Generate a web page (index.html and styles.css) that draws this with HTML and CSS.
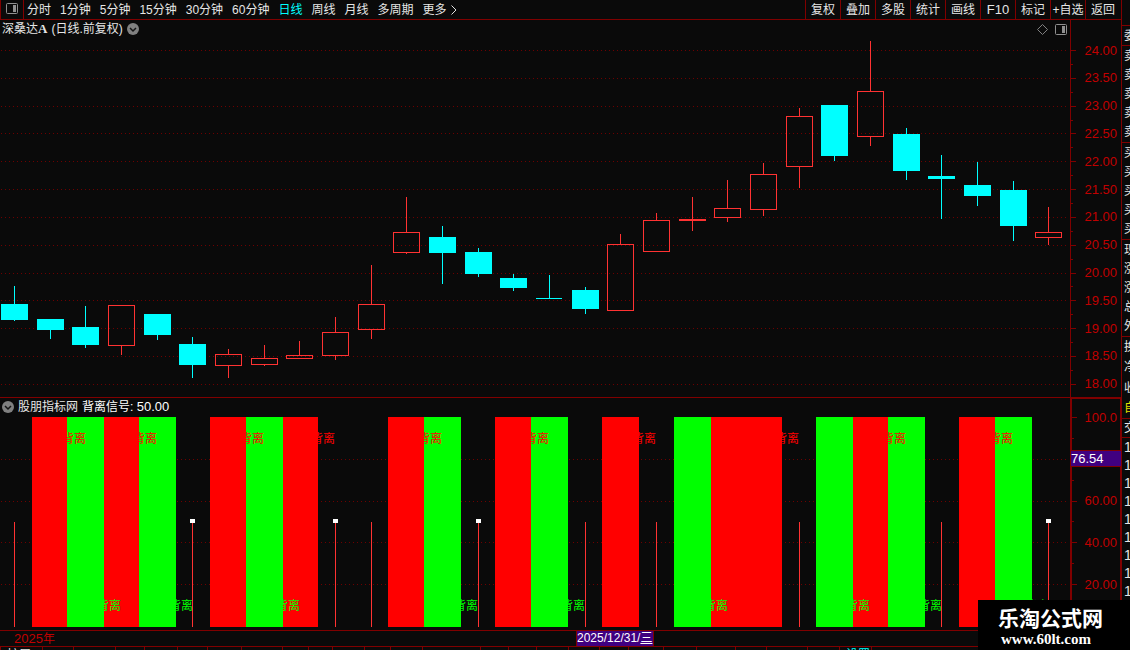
FILE: index.html
```html
<!DOCTYPE html>
<html lang="zh-CN">
<head>
<meta charset="utf-8">
<title>深桑达A 日线</title>
<link rel="stylesheet" href="styles.css">
</head>
<body>
<div class="app">
  <main class="main">
    <header class="toolbar">
      <button class="panel-toggle" aria-label="侧栏">
        <svg width="12" height="11" viewBox="0 0 12 11"><rect x=".5" y=".5" width="11" height="10" rx="1" fill="none" stroke="#909090"/><rect x="7" y="2" width="3" height="7" fill="#909090"/></svg>
      </button>
      <nav class="periods">
        <button>分时</button><button>1分钟</button><button>5分钟</button><button>15分钟</button><button>30分钟</button><button>60分钟</button><button class="active">日线</button><button>周线</button><button>月线</button><button>多周期</button><button class="more">更多<svg width="6" height="10" viewBox="0 0 6 10"><path d="M.5 .5L5 5L.5 9.5" fill="none" stroke="#e0e0e0"/></svg></button>
      </nav>
      <div class="tools">
        <button>复权</button><button>叠加</button><button>多股</button><button>统计</button><button>画线</button><button class="num">F10</button><button>标记</button><button>+自选</button><button>返回</button>
      </div>
    </header>

    <section class="panel price">
      <div class="plot">
        <svg class="chart" viewBox="0 20 1070 377" preserveAspectRatio="xMinYMin meet">
          <path class="grid" d="M1 50.5H1068M1 78.5H1068M1 106.5H1068M1 133.5H1068M1 161.5H1068M1 189.5H1068M1 217.5H1068M1 245.5H1068M1 273.5H1068M1 300.5H1068M1 328.5H1068M1 356.5H1068M1 384.5H1068"/>
          <path class="wick-down" d="M14.5 286V321M50.5 319V339M85.5 306V348M157.5 314V340M192.5 337V378M442.5 226V284M478.5 248V277M513.5 274V291M549.5 275V298M585.5 287V314M834.5 105V161M906.5 128V180M941.5 155V219M977.5 162V206M1013.5 181V241"/>
          <g class="down">
            <rect x="1" y="304" width="27" height="16"/><rect x="37" y="319" width="27" height="11"/><rect x="72" y="327" width="27" height="18"/><rect x="144" y="314" width="27" height="21"/><rect x="179" y="344" width="27" height="21"/>
            <rect x="429" y="237" width="27" height="16"/><rect x="465" y="252" width="27" height="22"/><rect x="500" y="278" width="27" height="10"/><rect x="536" y="298" width="26" height="1"/><rect x="572" y="290" width="27" height="19"/>
            <rect x="821" y="105" width="27" height="51"/><rect x="893" y="134" width="27" height="37"/><rect x="928" y="176" width="27" height="3"/><rect x="964" y="185" width="27" height="11"/><rect x="1000" y="190" width="27" height="36"/>
          </g>
          <path class="wick-up" d="M121.5 346V355M228.5 349V354M228.5 366V378M264.5 345V358M264.5 365V366M299.5 341V355M335.5 317V332M335.5 356V360M371.5 265V304M371.5 330V339M406.5 197V232M406.5 253V254M620.5 234V244M656.5 213V220M692.5 197V231M727.5 180V208M727.5 218V222M763.5 163V174M763.5 210V216M799.5 108V116M799.5 167V188M870.5 41V91M870.5 137V146M1048.5 207V232M1048.5 238V245"/>
          <g class="up">
            <rect x="108.500" y="305.500" width="26" height="40"/><rect x="215.500" y="354.500" width="26" height="11"/><rect x="251.500" y="358.500" width="26" height="6"/><rect x="286.500" y="355.500" width="26" height="3"/><rect x="322.500" y="332.500" width="26" height="23"/><rect x="358.500" y="304.500" width="26" height="25"/><rect x="393.500" y="232.500" width="26" height="20"/>
            <rect x="607.500" y="244.500" width="26" height="66"/><rect x="643.500" y="220.500" width="26" height="31"/><rect x="679.500" y="219.500" width="26" height="1"/><rect x="714.500" y="208.500" width="26" height="9"/><rect x="750.500" y="174.500" width="26" height="35"/><rect x="786.500" y="116.500" width="26" height="50"/><rect x="857.500" y="91.500" width="26" height="45"/><rect x="1035.500" y="232.500" width="26" height="5"/>
          </g>
        </svg>
        <div class="caption">
          <span class="name">深桑达<b>A</b></span>
          <span>(日线.前复权)</span>
          <button class="round" aria-label="展开"><svg width="12" height="12" viewBox="0 0 12 12"><circle cx="6" cy="6" r="6" fill="#808080"/><path d="M3 5L6 8L9 5" fill="none" stroke="#141414" stroke-width="1.500"/></svg></button>
          <span class="corner">
            <svg width="11" height="11" viewBox="0 0 11 11"><path d="M5.500 .5L10.500 5.500L5.500 10.500L.5 5.500Z" fill="none" stroke="#808080"/></svg>
            <svg width="12" height="11" viewBox="0 0 12 11"><rect x=".5" y=".5" width="11" height="10" rx="1" fill="none" stroke="#909090"/><rect x="7" y="2" width="3" height="7" fill="#909090"/></svg>
          </span>
        </div>
      </div>
      <ul class="axis">
        <li>24.00</li><li class="minor"></li><li>23.50</li><li class="minor"></li><li>23.00</li><li class="minor"></li><li>22.50</li><li class="minor"></li><li>22.00</li><li class="minor"></li><li>21.50</li><li class="minor"></li><li>21.00</li><li class="minor"></li><li>20.50</li><li class="minor"></li><li>20.00</li><li class="minor"></li><li>19.50</li><li class="minor"></li><li>19.00</li><li class="minor"></li><li>18.50</li><li class="minor"></li><li>18.00</li>
      </ul>
    </section>

    <section class="panel signal">
      <div class="plot">
        <svg class="chart" viewBox="0 398 1070 232" preserveAspectRatio="xMinYMin meet">
          <path class="grid" d="M1 459.500H1068M1 501.500H1068M1 542.500H1068M1 584.500H1068"/>
          <path class="bar-red" d="M32 417h35v210h-35zM104 417h35v210h-35zM210 417h36v210h-36zM283 417h35v210h-35zM388 417h36v210h-36zM495 417h36v210h-36zM602 417h37v210h-37zM711 417h71v210h-71zM853 417h35v210h-35zM959 417h36v210h-36z"/>
          <path class="bar-green" d="M67 417h37v210h-37zM139 417h37v210h-37zM246 417h37v210h-37zM424 417h37v210h-37zM531 417h37v210h-37zM674 417h37v210h-37zM816 417h37v210h-37zM888 417h37v210h-37zM995 417h37v210h-37z"/>
          <g class="tag-red">
            <text x="62" y="443">背离</text><text x="133" y="443">背离</text><text x="240" y="443">背离</text><text x="311" y="443">背离</text><text x="418" y="443">背离</text><text x="525" y="443">背离</text><text x="632" y="443">背离</text><text x="775" y="443">背离</text><text x="882" y="443">背离</text><text x="989" y="443">背离</text>
          </g>
          <g class="tag-green">
            <text x="97" y="610">背离</text><text x="169" y="610">背离</text><text x="276" y="610">背离</text><text x="454" y="610">背离</text><text x="561" y="610">背离</text><text x="704" y="610">背离</text><text x="846" y="610">背离</text><text x="918" y="610">背离</text><text x="1025" y="610">背离</text>
          </g>
          <path class="wick-up" d="M14.500 522V627M192.500 522V627M335.500 522V627M371.500 522V627M478.500 522V627M585.500 522V627M656.500 522V627M799.500 522V627M941.500 522V627M1048.500 522V627"/>
          <path class="mark" d="M190 519h5v4h-5zM333 519h5v4h-5zM476 519h5v4h-5zM1046 519h5v4h-5z"/>
        </svg>
        <div class="caption">
          <button class="round" aria-label="展开"><svg width="12" height="12" viewBox="0 0 12 12"><circle cx="6" cy="6" r="6" fill="#808080"/><path d="M3 5L6 8L9 5" fill="none" stroke="#141414" stroke-width="1.500"/></svg></button>
          <span>股朋指标网</span>
          <span class="value">背离信号: <span class="num">50.00</span></span>
        </div>
      </div>
      <ul class="axis">
        <li>100.0</li><li class="minor"></li><li></li><li class="minor"></li><li>60.00</li><li class="minor"></li><li>40.00</li><li class="minor"></li><li>20.00</li>
      </ul>
      <output class="cursor-value">76.54</output>
    </section>

    <div class="timeline">
      <span class="year"><span class="num">2025</span>年</span>
      <time class="cursor-date" datetime="2025-12-31">2025/12/31/<u>三</u></time>
    </div>

    <nav class="tabs">
      <a href="#" style="width:42px">扩展</a><a href="#" style="width:31px"></a><a href="#" style="width:42px"></a><a href="#" style="width:29px"></a><a href="#" style="width:33px"></a><a href="#" style="width:30px"></a><a href="#" style="width:34px"></a><a href="#" style="width:41px"></a><a href="#" style="width:26px"></a><a href="#" style="width:24px"></a><a href="#" style="width:32px"></a><a href="#" style="width:26px"></a><a href="#" style="width:32px"></a><a href="#" style="width:58px"></a><a href="#" style="width:28px"></a><a href="#" style="width:28px"></a><a href="#" style="width:32px"></a><a href="#" style="width:31px"></a><a href="#" style="width:29px"></a><a href="#" style="width:35px"></a><a href="#" style="width:33px"></a><a href="#" style="width:39px"></a><a href="#" style="width:31px"></a><a href="#" style="width:41px"></a><a href="#" style="width:32px"></a><a href="#" class="on" style="width:32px">设置</a><a href="#"></a>
    </nav>
  </main>

  <aside class="quotes">
    <div class="group first"><span>委</span></div>
    <div class="group"><span>卖</span><span>卖</span><span>卖</span><span>卖</span><span>卖</span></div>
    <div class="group"><span>买</span><span>买</span><span>买</span><span>买</span><span>买</span></div>
    <div class="group"><span>现</span><span>涨</span><span>涨</span><span>总</span><span>外</span></div>
    <div class="group short"><span>换</span><span>净</span><span>收</span><span class="self">自</span></div>
    <div class="group one"><span>交</span></div>
    <div class="group ticks"><span>1</span><span>1</span><span>1</span><span>1</span><span>1</span><span>1</span><span>1</span><span>1</span><span>1</span></div>
  </aside>

  <div class="brand">
    <strong>乐淘公式网</strong>
    <span>www.60lt.com</span>
  </div>
</div>
</body>
</html>
```
FILE: styles.css
```css
* { box-sizing: border-box; }

body {
  margin: 0;
  background: #0a0a0a;
  color: #e6e6e6;
  font: 12px/14px "Liberation Sans", "Noto Sans CJK SC", sans-serif;
  overflow: hidden;
}

button {
  margin: 0;
  padding: 0;
  border: 0;
  background: none;
  color: inherit;
  font: inherit;
  white-space: nowrap;
}

svg { display: block; }
ul { margin: 0; padding: 0; list-style: none; }
a { color: inherit; text-decoration: none; }
.num { font-size: 13px; }

.app {
  position: relative;
  display: grid;
  grid-template-columns: minmax(0, 1fr) 9px;
  height: 100vh;
}

.main {
  display: flex;
  flex-direction: column;
  min-height: 0;
  overflow: hidden;
}

/* toolbar */
.toolbar {
  flex: none;
  display: flex;
  height: 20px;
  border-bottom: 1px solid #800000;
}
.panel-toggle {
  display: flex;
  justify-content: center;
  width: 24px;
  padding-top: 3px;
  border: solid #800000;
  border-width: 0 1px;
}
.periods {
  display: flex;
  gap: 9px;
  margin-right: auto;
  padding-left: 3px;
}
.active { color: #00ffff; }
.more { display: flex; align-items: center; gap: 4px; }
.tools { display: flex; padding-right: 1px; }
.tools button {
  width: 35px;
  border-left: 1px solid #800000;
}

/* chart panels */
.panel {
  position: relative;
  display: grid;
  grid-template-columns: minmax(0, 1fr) 51px;
  min-height: 0;
}
.price { flex: 377 1 0; border-bottom: 1px solid #800000; }
.signal { flex: 232 1 0; border-bottom: 1px solid #800000; }
.plot { position: relative; min-height: 0; overflow: hidden; }
.chart { width: 100%; height: 100%; shape-rendering: crispEdges; }

.grid { stroke: #6e0000; stroke-dasharray: 1 3; fill: none; }
.wick-down { stroke: #00ffff; }
.down { fill: #00ffff; }
.wick-up { stroke: #ff3232; }
.up { fill: none; stroke: #ff3232; }
.bar-red, .tag-red { fill: #ff0000; }
.bar-green, .tag-green { fill: #00ff00; }
.mark { fill: #ffffff; }

.caption {
  position: absolute;
  top: 0;
  left: 0;
  right: 0;
  display: flex;
  align-items: center;
  height: 18px;
  padding: 0 3px 0 2px;
  gap: 4px;
}
.name b { font: bold 13px/14px "Liberation Serif", serif; }
.corner { display: flex; gap: 7px; margin-left: auto; }
.value { color: #ffffff; }

.axis {
  display: flex;
  flex-direction: column;
  justify-content: space-between;
  border-left: 1px solid #800000;
  padding: 30px 4px 12px 0;
  color: #c00000;
  font-size: 13px;
}
.axis li {
  display: flex;
  align-items: center;
  justify-content: space-between;
  height: 1px;
}
.axis li::before {
  content: "";
  width: 5px;
  height: 1px;
  background: #800000;
}
.axis .minor::before { width: 2px; }
.signal .axis {
  border: solid #800000;
  border-width: 1px 1px 0 2px;
  padding: 18px 3px 45px 0;
}

.cursor-value {
  position: absolute;
  top: 52px;
  right: 0;
  width: 50px;
  height: 17px;
  border: solid #800000;
  border-width: 1px 0;
  background: #400080;
  color: #ffffff;
  font-size: 13px;
  line-height: 15px;
}

/* time axis */
.timeline {
  position: relative;
  flex: none;
  height: 16px;
  padding-left: 14px;
  border-bottom: 1px solid #800000;
  line-height: 15px;
}
.year { color: #c00000; }
.cursor-date {
  position: absolute;
  top: -1px;
  left: 576px;
  height: 17px;
  padding-right: 1px;
  border: 1px solid #800000;
  background: #400080;
  color: #ffffff;
  line-height: 15px;
}

.tabs { flex: none; display: flex; height: 3px; overflow: hidden; }
.tabs a {
  flex: none;
  padding-left: 6px;
  border-left: 1px solid #800000;
  line-height: 16px;
}
.tabs .on { color: #00ffff; }

/* quote list */
.quotes {
  border-left: 1px solid #800000;
  padding-top: 25px;
  overflow: hidden;
}
.group {
  display: flex;
  flex-direction: column;
  justify-content: space-around;
  height: 97px;
  padding-left: 2px;
  border-top: 1px solid #800000;
  white-space: nowrap;
}
.first { height: 20px; }
.short { height: 82px; }
.one { height: 19px; }
.ticks { height: 163px; font-size: 14px; }
.self { color: #e0e000; }

.brand {
  position: absolute;
  right: 0;
  bottom: 0;
  width: 152px;
  height: 50px;
  padding: 7px 0 0 20px;
  background: #000000;
  color: #ffffff;
}
.brand strong { display: block; font-size: 21px; line-height: 24px; }
.brand span {
  display: block;
  padding-left: 3px;
  font: bold 15px/16px "Liberation Serif", serif;
}
```
